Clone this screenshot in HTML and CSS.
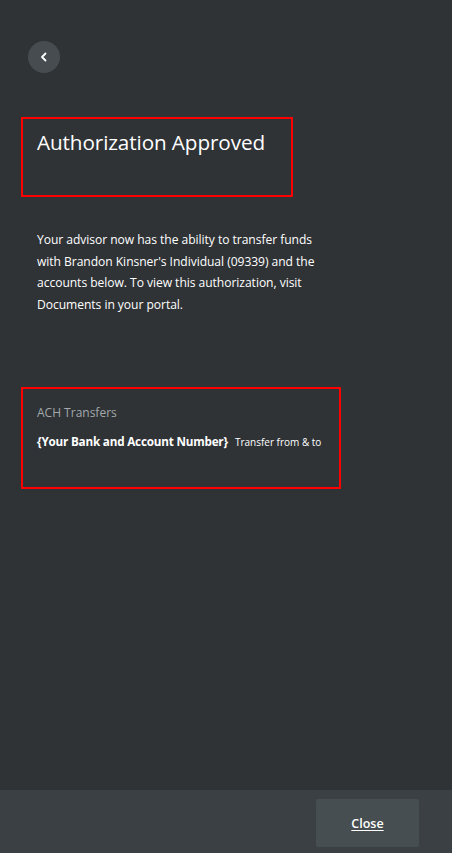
FILE: index.html
```html
<!DOCTYPE html>
<html>
<head>
<meta charset="utf-8">
<link rel="stylesheet" href="styles.css">
</head>
<body>
<div class="page">
  <main class="content">
    <button class="back" aria-label="Back">
      <svg width="12" height="12" viewBox="0 0 12 12"><path d="M7.5 2.5 L4 6 L7.5 9.5" fill="none" stroke="#ffffff" stroke-width="1.8" stroke-linecap="round" stroke-linejoin="round"/></svg>
    </button>
    <div class="title-box">
      <h1 class="title">Authorization Approved</h1>
    </div>
    <p class="desc">Your advisor now has the ability to transfer funds with Brandon Kinsner's Individual (09339) and the accounts below. To view this authorization, visit Documents in your portal.</p>
    <div class="ach-box">
      <div class="ach-label">ACH Transfers</div>
      <div class="ach-row"><span class="ach-bank">{Your Bank and Account Number}</span><span class="ach-type">Transfer from &amp; to</span></div>
    </div>
  </main>
  <footer class="footer">
    <button class="close">Close</button>
  </footer>
</div>
</body>
</html>
```
FILE: styles.css
```css
html, body {
  margin: 0;
  padding: 0;
  background: #2f3336;
}
body {
  font-family: "Open Sans", "Noto Sans", sans-serif;
  color: #ffffff;
}
.page {
  width: 452px;
  height: 853px;
  display: flex;
  flex-direction: column;
}
.content {
  flex: 1;
  padding: 41px 0 0 21px;
  display: flex;
  flex-direction: column;
  align-items: flex-start;
}
.back {
  width: 32px;
  height: 32px;
  margin-left: 7px;
  border-radius: 50%;
  border: none;
  background: #464c4f;
  padding: 0;
  display: flex;
  align-items: center;
  justify-content: center;
}
.title-box {
  margin-top: 44px;
  width: 268px;
  height: 76px;
  border: 2px solid #ff0000;
}
.title {
  margin: 0;
  padding: 9px 0 0 14px;
  font-size: 20.7px;
  font-weight: 400;
  line-height: 28px;
  letter-spacing: -0.1px;
}
.desc {
  margin: 32px 0 0 16px;
  width: 300px;
  font-size: 12.1px;
  line-height: 21.5px;
  letter-spacing: -0.05px;
}
.ach-box {
  margin-top: 72px;
  width: 302px;
  height: 98px;
  border: 2px solid #ff0000;
  padding: 0 0 0 14px;
}
.ach-label {
  margin-top: 15px;
  font-size: 12px;
  color: #a3a8ab;
  line-height: 18px;
}
.ach-row {
  margin-top: 11px;
  display: flex;
  align-items: baseline;
  gap: 7px;
  white-space: nowrap;
}
.ach-bank {
  font-size: 11.7px;
  font-weight: 700;
  letter-spacing: -0.2px;
}
.ach-type {
  font-size: 10px;
}
.footer {
  height: 63px;
  background: #3a4043;
  display: flex;
  justify-content: flex-end;
  align-items: flex-start;
  padding: 9px 33px 0 0;
  box-sizing: border-box;
}
.close {
  width: 103px;
  height: 48px;
  border: none;
  border-radius: 2px;
  background: #474e52;
  color: #ffffff;
  font-family: "Open Sans", "Noto Sans", sans-serif;
  font-size: 12.5px;
  font-weight: 600;
  text-decoration: underline;
  text-underline-offset: 2px;
}
```
